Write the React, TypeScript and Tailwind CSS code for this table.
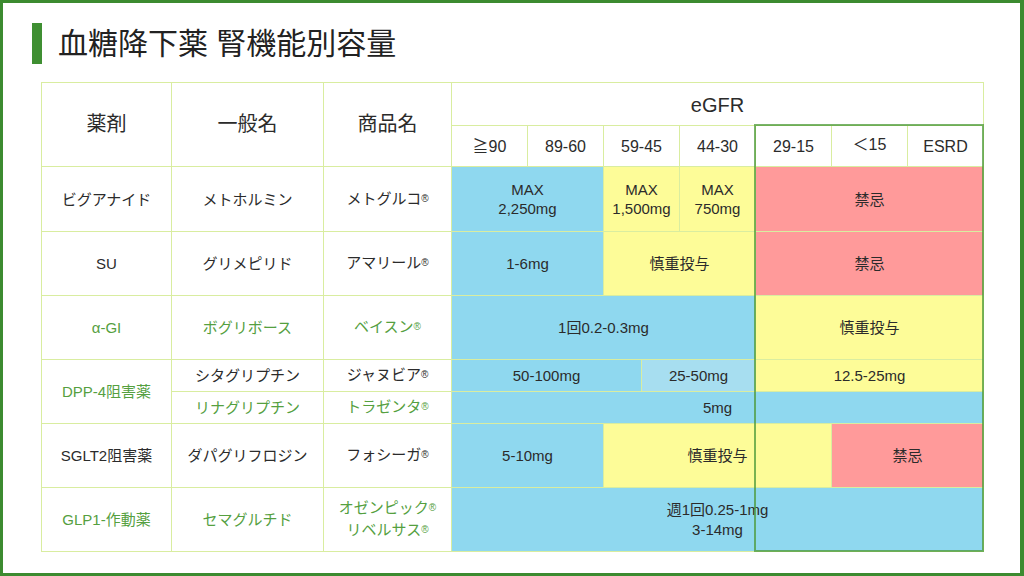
const LINE = "bg-[#d9eda0]";
const BLUE = "bg-[#8fd8ef]";
const BLUE_LT = "bg-[#a7def0]";
const YELLOW = "bg-[#fdfc98]";
const PINK = "bg-[#ff9a9a]";

function Reg() {
  return <span className="relative -top-[2px] text-[10px]">®</span>;
}

function Cell({
  className = "",
  children,
}: {
  className?: string;
  children?: React.ReactNode;
}) {
  return (
    <div className={`flex items-center justify-center text-center leading-[19px] ${className}`}>
      <div>{children}</div>
    </div>
  );
}

export default function App() {
  const green = "text-[#55a03f]";
  return (
    <div className="w-[1024px] h-[576px] bg-white border-[#3c8b30] border-t-[3px] border-l-[3px] border-r-[4px] border-b-[3px] font-['Liberation_Sans','Noto_Sans_CJK_JP',sans-serif] text-[#2b2b2b]">
      <div className="flex flex-col pl-[29px] pt-[20px]">
        <div className="flex items-center h-[41px]">
          <div className="w-[10px] h-[41px] bg-[#3f8f32]" />
          <h1 className="ml-[16px] text-[30px] leading-none text-[#222]">
            血糖降下薬 腎機能別容量
          </h1>
        </div>

        <div className="relative ml-[9px] mt-[18px] w-[943px] h-[470px]">
          <div
            className={`grid grid-cols-[129px_151px_127px_repeat(7,75px)] grid-rows-[42px_40px_64px_63px_63px_31px_31px_63px_63px] gap-px p-px ${LINE} text-[15px]`}
          >
            {/* header */}
            <Cell className="row-span-2 bg-white text-[20px]">薬剤</Cell>
            <Cell className="row-span-2 bg-white text-[20px]">一般名</Cell>
            <Cell className="row-span-2 bg-white text-[20px]">商品名</Cell>
            <Cell className="col-span-7 bg-white text-[20px] pt-[2px]">eGFR</Cell>
            <Cell className="bg-white text-[16px]">≧90</Cell>
            <Cell className="bg-white text-[16px]">89-60</Cell>
            <Cell className="bg-white text-[16px]">59-45</Cell>
            <Cell className="bg-white text-[16px]">44-30</Cell>
            <Cell className="bg-white text-[16px]">29-15</Cell>
            <Cell className="bg-white text-[16px]">
              <span className="relative -top-[2px]">＜15</span>
            </Cell>
            <Cell className="bg-white text-[16px]">ESRD</Cell>

            {/* ビグアナイド */}
            <Cell className="bg-white">ビグアナイド</Cell>
            <Cell className="bg-white">メトホルミン</Cell>
            <Cell className="bg-white">
              メトグルコ<Reg />
            </Cell>
            <Cell className={`col-span-2 ${BLUE}`}>
              MAX
              <br />
              2,250mg
            </Cell>
            <Cell className={YELLOW}>
              MAX
              <br />
              1,500mg
            </Cell>
            <Cell className={YELLOW}>
              MAX
              <br />
              750mg
            </Cell>
            <Cell className={`col-span-3 ${PINK}`}>禁忌</Cell>

            {/* SU */}
            <Cell className="bg-white">SU</Cell>
            <Cell className="bg-white">グリメピリド</Cell>
            <Cell className="bg-white">
              アマリール<Reg />
            </Cell>
            <Cell className={`col-span-2 ${BLUE}`}>1-6mg</Cell>
            <Cell className={`col-span-2 ${YELLOW}`}>慎重投与</Cell>
            <Cell className={`col-span-3 ${PINK}`}>禁忌</Cell>

            {/* α-GI */}
            <Cell className={`bg-white ${green}`}>α-GI</Cell>
            <Cell className={`bg-white ${green}`}>ボグリボース</Cell>
            <Cell className={`bg-white ${green}`}>
              ベイスン<Reg />
            </Cell>
            <Cell className={`col-span-4 ${BLUE}`}>1回0.2-0.3mg</Cell>
            <Cell className={`col-span-3 ${YELLOW}`}>慎重投与</Cell>

            {/* DPP-4 */}
            <Cell className={`row-span-2 bg-white ${green}`}>DPP-4阻害薬</Cell>
            <Cell className="bg-white">シタグリプチン</Cell>
            <Cell className="bg-white">
              ジャヌビア<Reg />
            </Cell>
            <div className={`col-span-4 flex gap-px ${LINE}`}>
              <Cell className={`w-[189px] ${BLUE}`}>50-100mg</Cell>
              <Cell className={`flex-1 ${BLUE_LT}`}>25-50mg</Cell>
            </div>
            <Cell className={`col-span-3 ${YELLOW}`}>12.5-25mg</Cell>

            <Cell className={`bg-white ${green}`}>リナグリプチン</Cell>
            <Cell className={`bg-white ${green}`}>
              トラゼンタ<Reg />
            </Cell>
            <Cell className={`col-span-7 ${BLUE}`}>5mg</Cell>

            {/* SGLT2 */}
            <Cell className="bg-white">SGLT2阻害薬</Cell>
            <Cell className="bg-white">ダパグリフロジン</Cell>
            <Cell className="bg-white">
              フォシーガ<Reg />
            </Cell>
            <Cell className={`col-span-2 ${BLUE}`}>5-10mg</Cell>
            <Cell className={`col-span-3 ${YELLOW}`}>慎重投与</Cell>
            <Cell className={`col-span-2 ${PINK}`}>禁忌</Cell>

            {/* GLP1 */}
            <Cell className={`bg-white ${green}`}>GLP1-作動薬</Cell>
            <Cell className={`bg-white ${green}`}>セマグルチド</Cell>
            <Cell className={`bg-white ${green} leading-[20px]`}>
              オゼンピック<Reg />
              <br />
              リベルサス<Reg />
            </Cell>
            <Cell className={`col-span-7 ${BLUE} leading-[20px]`}>
              週1回0.25-1mg
              <br />
              3-14mg
            </Cell>
          </div>

          {/* severe renal impairment outline */}
          <div className="pointer-events-none absolute left-[713px] top-[42px] w-[230px] h-[428px] border-2 border-[#4c9a3a]/75" />
        </div>
      </div>
    </div>
  );
}
